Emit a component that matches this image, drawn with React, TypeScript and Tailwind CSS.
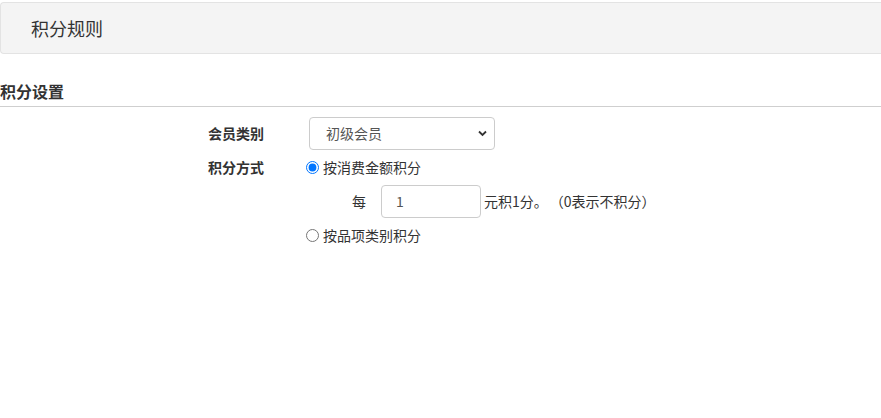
import { useState } from 'react'

export default function App() {
  const [mode, setMode] = useState<'amount' | 'category'>('amount')
  const [level, setLevel] = useState('初级会员')
  const [per, setPer] = useState('1')

  return (
    <div className="min-h-[418px] bg-white text-[14px] text-[#333] [font-family:'Noto_Sans_CJK_SC','Liberation_Sans',sans-serif]">
      <div className="pt-[2px]">
        <div className="flex h-[52px] items-center rounded-l-[4px] border border-r-0 border-[#e3e3e3] bg-[#f4f4f4] pl-[30px] text-[18px] text-[#333]">
          积分规则
        </div>
      </div>

      <div className="mt-[26px] border-b border-[#cfcfcf] pb-[4px] text-[16px] font-bold leading-[22px] text-[#333]">
        积分设置
      </div>

      <div className="mt-[9px]">
        <div className="flex h-[34px] items-center">
          <label className="ml-[208px] w-[101px] font-bold">会员类别</label>
          <div className="relative">
            <select
              value={level}
              onChange={(e) => setLevel(e.target.value)}
              className="h-[33px] w-[186px] appearance-none rounded-[4px] border border-[#ccc] bg-white pl-[16px] text-[14px] text-[#555] outline-none"
            >
              <option>初级会员</option>
              <option>中级会员</option>
              <option>高级会员</option>
            </select>
            <svg
              className="pointer-events-none absolute right-[8px] top-[13px]"
              width="9"
              height="7"
              viewBox="0 0 9 7"
            >
              <path d="M1 1.5 L4.5 5 L8 1.5" fill="none" stroke="#333" strokeWidth="1.8" />
            </svg>
          </div>
        </div>

        <div className="flex h-[34px] items-center">
          <label className="ml-[208px] w-[98px] font-bold">积分方式</label>
          <label className="flex items-center gap-[4px]">
            <input
              type="radio"
              name="mode"
              checked={mode === 'amount'}
              onChange={() => setMode('amount')}
              className="m-0 h-[13px] w-[13px] accent-[#0075ff]"
            />
            按消费金额积分
          </label>
        </div>

        <div className="flex h-[34px] items-center">
          <span className="ml-[352px] w-[29px]">每</span>
          <input
            type="text"
            value={per}
            onChange={(e) => setPer(e.target.value)}
            className="h-[33px] w-[100px] rounded-[4px] border border-[#ccc] pl-[14px] text-[14px] text-[#555] outline-none"
          />
          <span className="ml-[3px]">元积1分。</span>
          <span className="ml-[2px]">（0表示不积分）</span>
        </div>

        <div className="flex h-[34px] items-center">
          <label className="ml-[306px] flex items-center gap-[4px]">
            <input
              type="radio"
              name="mode"
              checked={mode === 'category'}
              onChange={() => setMode('category')}
              className="m-0 h-[13px] w-[13px] accent-[#0075ff]"
            />
            按品项类别积分
          </label>
        </div>
      </div>
    </div>
  )
}
